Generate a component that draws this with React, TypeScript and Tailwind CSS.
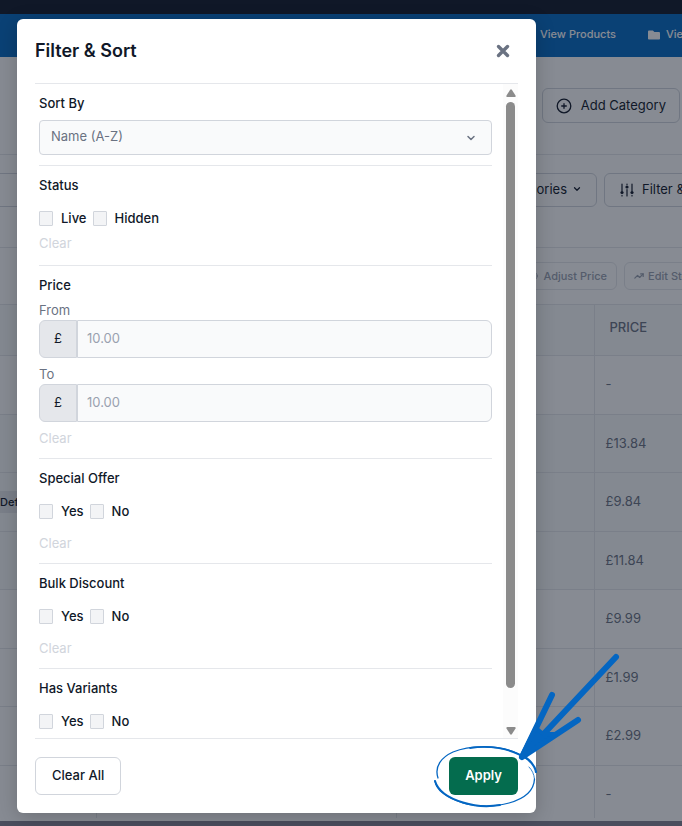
import React from 'react'
import { ChevronDown, TrendingUp } from 'lucide-react'
import { FaFolder } from 'react-icons/fa'

interface FilterSectionProps {
   title: string
   options: string[]
   clearClass?: string
}

interface PriceInputProps {
   id: string
   label: string
}

interface Row {
   price: string
   tag?: string
   variant?: boolean
}

const rows: Row[] = [
   { price: '-' },
   { price: '£13.84', variant: true },
   { price: '£9.84', variant: true, tag: 'Default' },
   { price: '£11.84', variant: true },
   { price: '£9.99' },
   { price: '£1.99' },
   { price: '£2.99' },
]

function PlusCircleIcon({ size = 16 }: { size?: number }) {
   return (
      <svg width={size} height={size} viewBox="0 0 16 16" fill="none" stroke="currentColor" strokeWidth="1.3" strokeLinecap="round">
         <circle cx="8" cy="8" r="6.8" />
         <path d="M8 5.700v4.600M5.700 8h4.600" />
      </svg>
   )
}

function SlidersIcon() {
   return (
      <svg width="14" height="14" viewBox="0 0 14 14" fill="none" stroke="currentColor" strokeWidth="1.2" strokeLinecap="round">
         <path d="M2 1v7M2 12.400v.6M7 1v.6M7 6.500v6.500M12 1v7M12 12.400v.6" />
         <g fill="currentColor" stroke="none">
            <circle cx="2" cy="9.500" r="1.600" />
            <circle cx="7" cy="4" r="1.600" />
            <circle cx="12" cy="9.500" r="1.600" />
         </g>
      </svg>
   )
}

function PriceInput({ id, label }: PriceInputProps) {
   return (
      <div>
         <label htmlFor={id} className="block leading-5 text-gray-500">
            {label}
         </label>
         <div className="flex h-[38px]">
            <span className="flex w-[38px] items-center justify-center rounded-l-md border border-gray-300 bg-gray-200">£</span>
            <input
               id={id}
               type="text"
               placeholder="10.00"
               className="min-w-0 flex-1 rounded-r-md border border-gray-300 bg-gray-50 px-[9px] placeholder:text-gray-400"
            />
         </div>
      </div>
   )
}

function FilterSection({ title, options, clearClass = 'mt-3' }: FilterSectionProps) {
   return (
      <fieldset className="border-b border-gray-200 pt-[9px] pb-[10px]">
         <legend className="float-left w-full font-medium leading-5">{title}</legend>
         <div className="clear-both flex gap-[6px] pt-[13px]">
            {options.map((option) => (
               <label key={option} className="flex items-center gap-2 font-medium leading-5">
                  <input type="checkbox" className="h-[15px] w-[14px] appearance-none rounded-[1px] border border-gray-300 bg-gray-100" />
                  {option}
               </label>
            ))}
         </div>
         <button type="button" className={`block leading-5 text-gray-300 ${clearClass}`}>
            Clear
         </button>
      </fieldset>
   )
}

/** Category list behind the dialog */
function CategoryPage() {
   return (
      <div className="flex min-h-screen flex-col bg-white">
         <div className="h-[14px] bg-gray-900" />
         <nav className="flex h-[43px] items-center gap-8 bg-[#056ac3] pb-[2px] pl-[540px] text-[11px] font-medium whitespace-nowrap text-white">
            <a href="#products">View Products</a>
            <a href="#categories" className="flex items-center gap-[6px]">
               <FaFolder size={12} />
               View Categories
            </a>
         </nav>
         <div className="flex h-[98px] items-center justify-end border-b border-gray-200 pr-[2px]">
            <button type="button" className="flex h-[35px] items-center gap-[9px] rounded-md border border-gray-300 px-[13px]">
               <PlusCircleIcon />
               Add Category
            </button>
         </div>
         <div className="flex h-[93px] gap-2 overflow-hidden border-b border-gray-200 pt-[18px] whitespace-nowrap">
            <div className="h-[34px] w-[400px] shrink-0 border-y border-gray-300" />
            <button type="button" className="flex h-[34px] w-[189px] shrink-0 items-center justify-end gap-[5px] rounded-md border border-gray-300 pr-[14px]">
               All Categories
               <ChevronDown size={10} strokeWidth={3} className="mb-[3px]" />
            </button>
            <button type="button" className="-ml-px flex h-[34px] shrink-0 items-center gap-2 rounded-md border border-gray-300 px-[15px]">
               <SlidersIcon />
               Filter &amp; Sort
            </button>
         </div>
         <div className="flex h-14 gap-[7px] overflow-hidden pt-[14px] pl-[500px] text-[11px] font-medium whitespace-nowrap text-gray-400">
            <button type="button" className="flex h-7 w-[117px] shrink-0 items-center justify-end gap-[5px] rounded-md border border-gray-200 pr-[9px]">
               <PlusCircleIcon size={10} />
               Adjust Price
            </button>
            <button type="button" className="flex h-7 shrink-0 items-center gap-1 rounded-md border border-gray-200 px-[9px]">
               <TrendingUp size={10} strokeWidth={3} />
               Edit Stock
            </button>
         </div>
         <table className="w-full table-fixed border-collapse text-left text-gray-500">
            <thead>
               <tr className="h-[51px] border-y border-gray-200 bg-gray-50">
                  <th className="w-24" />
                  <th className="w-[300px]" />
                  <th className="w-[198px] border-r border-gray-200" />
                  <th className="pb-1 pl-[15px] font-medium">PRICE</th>
               </tr>
            </thead>
            <tbody>
               {rows.map((row, i) => (
                  <tr key={i} className={`border-b border-gray-200 odd:h-[59px] even:h-[58px] ${row.variant ? 'bg-gray-50' : ''}`}>
                     <td className="border-r border-gray-200">
                        {row.tag && <span className="bg-gray-200 py-1 text-[11px] font-medium text-gray-900">{row.tag}</span>}
                     </td>
                     <td className="border-r border-gray-200" />
                     <td className="border-r border-gray-200" />
                     <td className="pl-[11px]">{row.price}</td>
                  </tr>
               ))}
               <tr className="h-[52px]">
                  <td className="border-r border-gray-200" />
                  <td className="border-r border-gray-200" />
                  <td className="border-r border-gray-200" />
                  <td className="pt-[6px] pl-[11px]">-</td>
               </tr>
            </tbody>
         </table>
         <div className="mt-[3px] h-3 bg-[#858292]" />
      </div>
   )
}

/** Hand drawn ring and arrow around the apply button */
function ApplyMarker() {
   return (
      <svg
         className="pointer-events-none absolute -top-[107px] -right-[112px]"
         width="200"
         height="165"
         viewBox="0 0 200 165"
         fill="none"
         stroke="#0466c2"
         strokeLinecap="round"
         strokeLinejoin="round"
      >
         <path d="M8 128C4 116 12 107 23 102C33 98 45 96.500 57 97C73 97.500 88 102 97 109" strokeWidth="1.300" />
         <path d="M40 98C58 95.500 76 98 90 105" strokeWidth="1.800" />
         <path d="M92 105C100 110 105 116 106 122" strokeWidth="2.200" />
         <path d="M5 131C6 140 15 147 33 153C42 156 62 158 79 153C97 148 104 139 104.500 129" strokeWidth="1.300" />
         <path d="M5 131C8 141 18 148 33 152.500C44 156 58 157 70 155" strokeWidth="2" />
         <path d="M104.500 129C104 124 102 120 99 117" strokeWidth=".8" />
         <path d="M186 7L92 107M122 45L92 107L148 70" strokeWidth="6" />
         <path d="M91 107L106 78L113 84L126 84Z" fill="#0466c2" strokeWidth="4" />
      </svg>
   )
}

export default function App() {
   return (
      <div className="relative h-screen overflow-hidden font-['Inter',sans-serif] text-[13px] text-gray-900">
         <CategoryPage />

         <div className="absolute inset-0 flex bg-gray-900/50 pt-[19px] pr-[146px] pb-[13px] pl-[17px]">
            <div
               role="dialog"
               aria-labelledby="filter-title"
               className="flex min-w-0 flex-1 flex-col rounded-md bg-white px-[18px] shadow-[0_4px_20px_rgba(0,0,0,0.2)]"
            >
               <header className="flex h-[65px] shrink-0 items-center justify-between border-b border-gray-200">
                  <h2 id="filter-title" className="text-lg font-semibold">
                     Filter &amp; Sort
                  </h2>
                  <button type="button" aria-label="Close" className="mr-2 text-gray-500">
                     <svg width="14" height="14" viewBox="0 0 14 14" stroke="currentColor" strokeWidth="3.400" strokeLinecap="round">
                        <path d="M2.500 2.500l9 9M11.500 2.500l-9 9" />
                     </svg>
                  </button>
               </header>

               <div className="flex min-h-0 flex-1 border-b border-gray-200">
                  <form className="min-w-0 flex-1 overflow-hidden pr-[11px] pl-1">
                     <div className="border-b border-gray-200 pt-[9px] pb-[10px]">
                        <label htmlFor="sort" className="block font-medium leading-5">
                           Sort By
                        </label>
                        <div className="relative mt-[7px]">
                           <select id="sort" className="block h-[35px] w-full appearance-none rounded-sm border border-gray-300 bg-gray-50 px-[11px] pb-px text-gray-500">
                              <option>Name (A-Z)</option>
                           </select>
                           <ChevronDown size={12} strokeWidth={3} className="pointer-events-none absolute top-3 right-[15px] text-gray-500" />
                        </div>
                     </div>
                     <FilterSection title="Status" options={['Live', 'Hidden']} clearClass="mt-[5px] mb-[2px]" />
                     <fieldset className="border-b border-gray-200 pt-[9px] pb-[10px]">
                        <legend className="float-left w-full font-medium leading-5">Price</legend>
                        <div className="clear-both flex flex-col gap-[6px] pt-[5px]">
                           <PriceInput id="price-from" label="From" />
                           <PriceInput id="price-to" label="To" />
                        </div>
                        <button type="button" className="mt-[6px] block leading-5 text-gray-300">
                           Clear
                        </button>
                     </fieldset>
                     <FilterSection title="Special Offer" options={['Yes', 'No']} />
                     <FilterSection title="Bulk Discount" options={['Yes', 'No']} />
                     <FilterSection title="Has Variants" options={['Yes', 'No']} />
                  </form>
                  <div className="flex w-[15px] flex-col items-center bg-[#fcfcfc] pt-[5px] pb-[3px]">
                     <svg width="10" height="8" viewBox="0 0 10 8" fill="#8b8b8b">
                        <path d="M4 1Q5 -.5 6 1L9.500 6.500Q10 8 8.500 8H1.500Q0 8 .5 6.500Z" />
                     </svg>
                     <div className="mt-[5px] w-[9px] flex-1 rounded-full bg-[#8b8b8b]" />
                     <svg className="mt-[39px]" width="10" height="8" viewBox="0 0 10 8" fill="#8b8b8b">
                        <path d="M4 7Q5 8.500 6 7L9.500 1.500Q10 0 8.500 0H1.500Q0 0 .5 1.500Z" />
                     </svg>
                  </div>
               </div>

               <footer className="flex h-[74px] shrink-0 items-center justify-between">
                  <button type="button" className="h-[38px] rounded-md border border-gray-300 px-4 font-medium">
                     Clear All
                  </button>
                  <div className="relative">
                     <button type="button" className="h-[38px] rounded-md bg-[#046c4e] px-4 font-semibold text-white">
                        Apply
                     </button>
                     <ApplyMarker />
                  </div>
               </footer>
            </div>
         </div>
      </div>
   )
}
